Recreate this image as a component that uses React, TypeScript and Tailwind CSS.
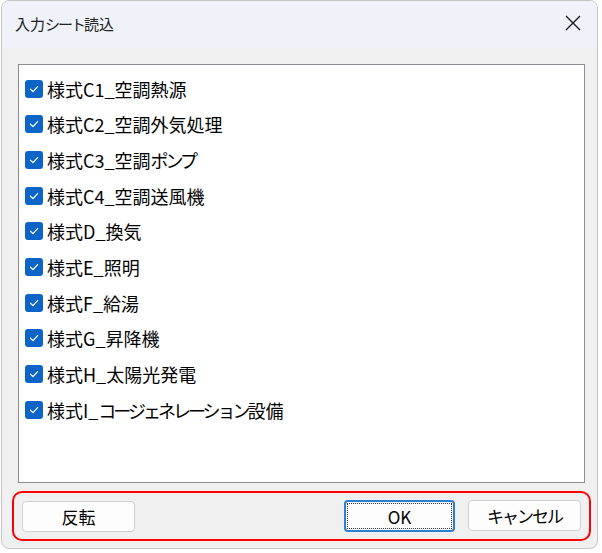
import React from "react";

const items = [
  "様式C1_空調熱源",
  "様式C2_空調外気処理",
  "様式C3_空調ポンプ",
  "様式C4_空調送風機",
  "様式D_換気",
  "様式E_照明",
  "様式F_給湯",
  "様式G_昇降機",
  "様式H_太陽光発電",
  "様式I_コージェネレーション設備",
];

const KANA = /[\u30A0-\u30FF]/;

function Label({ text }: { text: string }) {
  const parts: { s: string; k: boolean }[] = [];
  for (const ch of text) {
    const k = KANA.test(ch);
    const last = parts[parts.length - 1];
    if (last && last.k === k) last.s += ch;
    else parts.push({ s: ch, k });
  }
  return (
    <>
      {parts.map((p, i) =>
        p.k ? (
          <span key={i} className="tracking-[-3px]">{p.s}</span>
        ) : (
          <span key={i}>{p.s}</span>
        )
      )}
    </>
  );
}

function Check() {
  return (
    <span className="w-[18px] h-[18px] rounded-[3px] bg-[#0c64c6] flex items-center justify-center shrink-0">
      <svg width="12" height="12" viewBox="0 0 12 12" fill="none">
        <path d="M2.5 6.2 L5 8.6 L9.6 3.6" stroke="#ffffff" strokeWidth="1.3" strokeLinecap="round" strokeLinejoin="round" />
      </svg>
    </span>
  );
}

const ff = "font-['Noto_Sans_CJK_JP','Noto_Sans',sans-serif]";

export default function App() {
  return (
    <div className={"w-[602px] h-[553px] bg-white " + ff}>
      <div className="ml-[1px] w-[597px] h-[549px] border border-[#c6c6c6] rounded-[8px] overflow-hidden flex flex-col bg-[#f0f0f0]">
        <div className="h-[47px] shrink-0 bg-[#eff3f9] flex items-center justify-between pl-[13px] pr-[14px]">
          <span className="text-[15px] text-[#222] leading-none -mt-[2px]">
            入力<span className="tracking-[-2px]">シート</span>読込
          </span>
          <svg width="20" height="20" viewBox="0 0 20 20" className="-mt-[3px]">
            <path d="M3 3 L17 17 M17 3 L3 17" stroke="#1a1a1a" strokeWidth="1.4" />
          </svg>
        </div>
        <div className="pl-[16px] pr-[12px] pt-[16px]">
          <div className="h-[419px] border border-[#8a8d93] bg-white pt-[6px] pl-[6px]">
            {items.map((t) => (
              <div key={t} className="h-[35.67px] flex items-center gap-[4px]">
                <Check />
                <span className="text-[18px] text-black leading-none">
                  <Label text={t} />
                </span>
              </div>
            ))}
          </div>
        </div>
        <div className="ml-[10px] mr-[6px] mt-[8px] h-[50px] border-2 border-[#ff0000] rounded-[10px] flex items-center justify-between pl-[8px] pr-[8px]">
          <button className={"w-[113px] h-[31px] bg-[#fdfdfd] border border-[#d0d0d0] rounded-[4px] text-[17px] text-black leading-none " + ff}>反転</button>
          <div className="flex gap-[13px]">
            <button className={"w-[111px] h-[32px] bg-[#fdfdfd] border-2 border-[#2a7ed6] rounded-[4px] p-[1px] " + ff}>
              <span className="w-full h-full border border-dotted border-[#333] flex items-center justify-center text-[17px] text-black leading-none">OK</span>
            </button>
            <button className={"w-[113px] h-[31px] bg-[#fdfdfd] border border-[#d0d0d0] rounded-[4px] text-[17px] text-black leading-none tracking-[-2px] " + ff}>キャンセル</button>
          </div>
        </div>
      </div>
    </div>
  );
}
